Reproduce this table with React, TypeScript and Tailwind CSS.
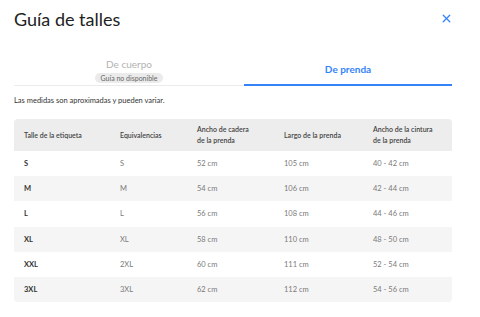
import { X } from 'lucide-react'

const rows = [
  ['S', 'S', '52 cm', '105 cm', '40 - 42 cm'],
  ['M', 'M', '54 cm', '106 cm', '42 - 44 cm'],
  ['L', 'L', '56 cm', '108 cm', '44 - 46 cm'],
  ['XL', 'XL', '58 cm', '110 cm', '48 - 50 cm'],
  ['XXL', '2XL', '60 cm', '111 cm', '52 - 54 cm'],
  ['3XL', '3XL', '62 cm', '112 cm', '54 - 56 cm'],
]

const cols = 'grid grid-cols-[106px_77px_87px_89px_79px]'

export default function App() {
  return (
    <div className="w-[480px] h-[317px] bg-white font-['Lato','Liberation_Sans',sans-serif] text-[#333] overflow-hidden">
      <div className="w-[438px] ml-[14px]">
        {/* titulo + cerrar */}
        <div className="flex items-start justify-between pt-[7px]">
          <h1 className="text-[18px] leading-[24px] font-normal text-[#222]">Guía de talles</h1>
          <button className="mt-[5px] -mr-px text-[#3483fa]">
            <X size={13} strokeWidth={2.4} />
          </button>
        </div>

        {/* tabs */}
        <div className="mt-[24px] flex h-[31px] border-b border-[#ebebeb]">
          <div className="flex w-[230px] flex-col items-center pt-[2px]">
            <span className="text-[10px] leading-[14px] text-[#b3b3b3]">De cuerpo</span>
            <span className="mt-[2px] rounded-full bg-[#ebebeb] px-[6px] text-[7px] leading-[10px] text-[#666]">
              Guía no disponible
            </span>
          </div>
          <div className="-mb-px flex flex-1 items-center justify-center border-b-2 border-[#3483fa]">
            <span className="text-[10px] font-bold text-[#3483fa]">De prenda</span>
          </div>
        </div>

        <p className="mt-[10px] text-[7.5px] leading-[10px] text-[#333]">
          Las medidas son aproximadas y pueden variar.
        </p>

        {/* tabla */}
        <div className="mt-[13px] overflow-hidden rounded-[4px]">
          <div className={`${cols} h-[32px] items-center bg-[#ededed] text-[7px] font-semibold leading-[11px] text-[#444]`}>
            <span className="pl-[10px]">Talle de la etiqueta</span>
            <span>Equivalencias</span>
            <span>
              Ancho de cadera
              <br />
              de la prenda
            </span>
            <span>Largo de la prenda</span>
            <span>
              Ancho de la cintura
              <br />
              de la prenda
            </span>
          </div>
          {rows.map((r, i) => (
            <div
              key={r[0]}
              className={`${cols} h-[25.2px] items-center text-[7.5px] ${i % 2 === 1 ? 'bg-[#f5f5f5]' : 'bg-white'}`}
            >
              <span className="pl-[10px] font-bold text-[#333]">{r[0]}</span>
              {r.slice(1).map((c, j) => (
                <span key={j} className="text-[#7a7a7a]">
                  {c}
                </span>
              ))}
            </div>
          ))}
        </div>
      </div>
    </div>
  )
}
